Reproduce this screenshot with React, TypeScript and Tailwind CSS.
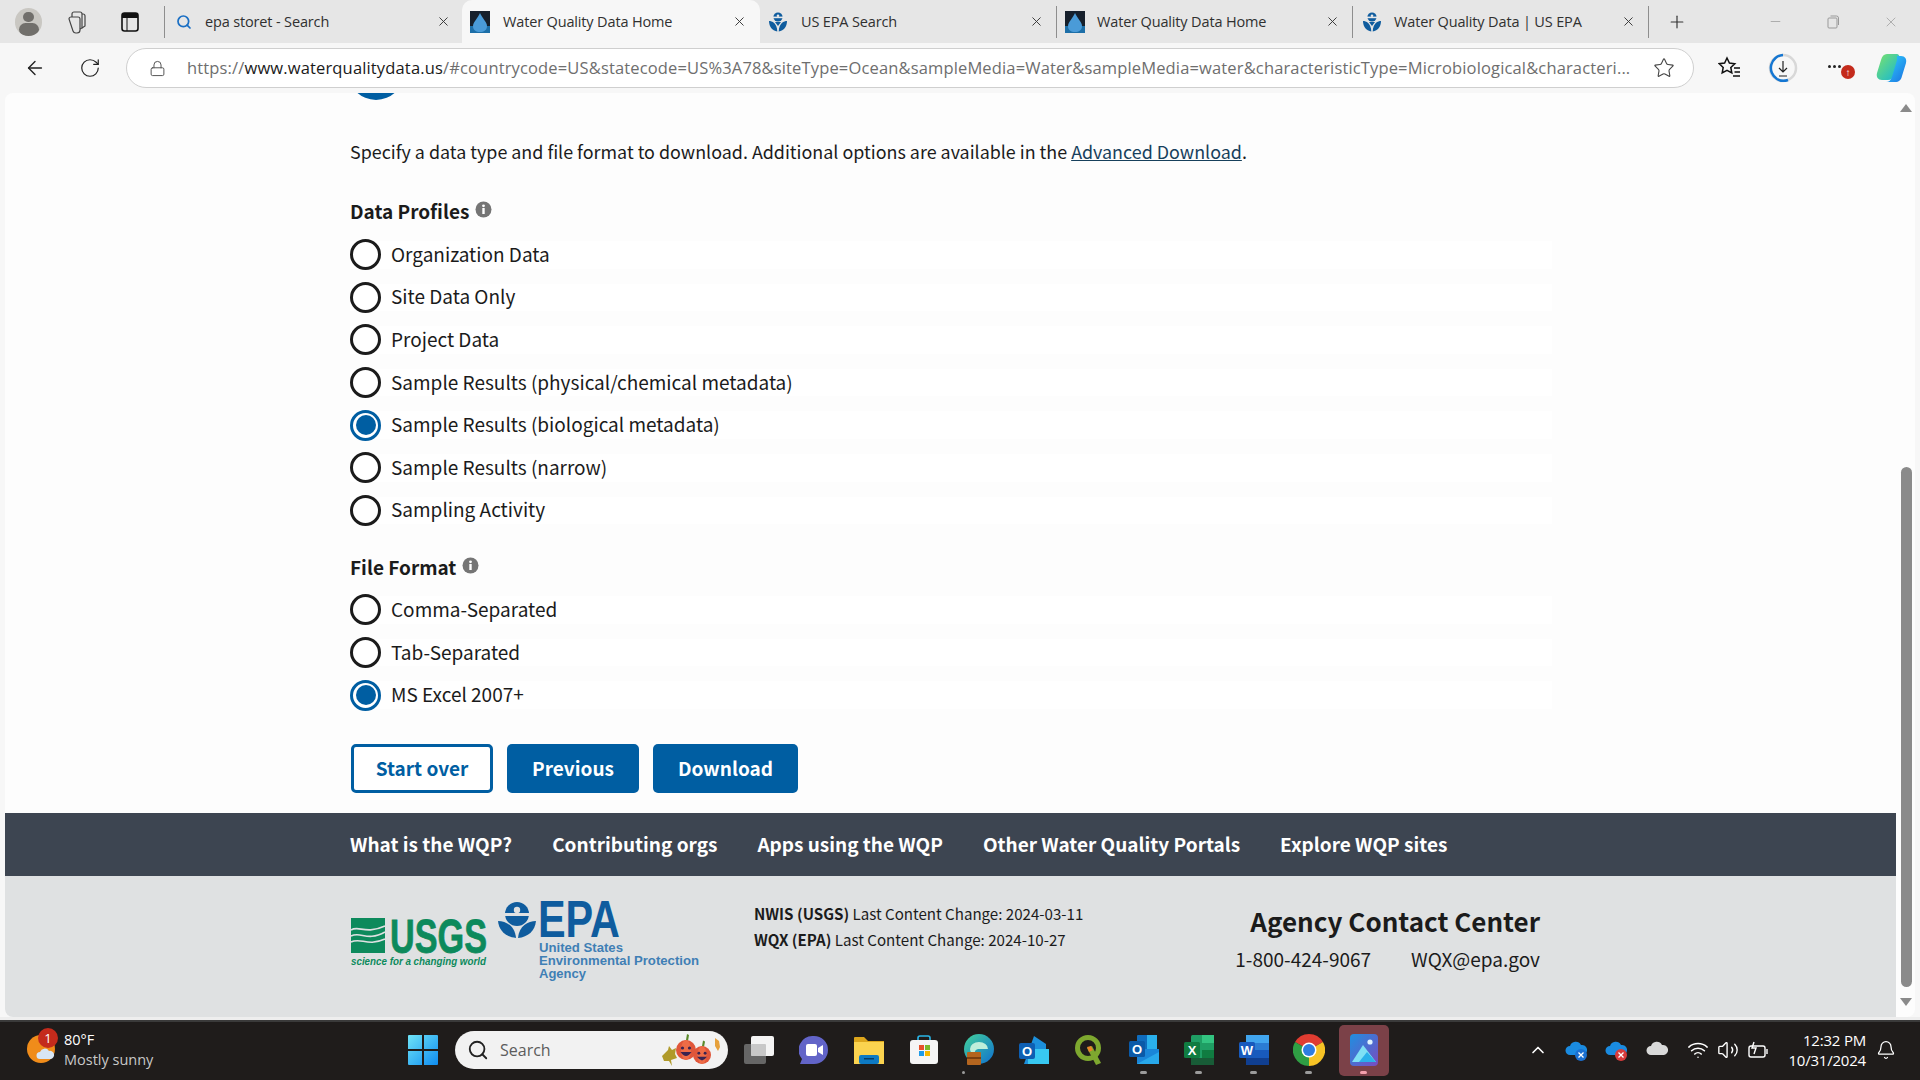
import React from 'react';
import { ArrowLeft, RotateCw, Lock, Star, X, Plus, Minus, Search, ChevronUp, Bell, Wifi, Volume2 } from 'lucide-react';

const blue = 'bg-[#005ea2]';

const WqpIcon = () => (
  <svg width="20" height="22" viewBox="0 0 20 22">
    <rect width="20" height="22" fill="#16202c" />
    <rect y="15" width="20" height="7" fill="#1d6fa8" />
    <path d="M10 2 C12 7 17 11 17 15 C17 19 14 21 10 21 C6 21 3 19 3 15 C3 11 8 7 10 2Z" fill="#4a9bd8" />
  </svg>
);

const EpaIcon = ({ size = 20 }: { size?: number }) => (
  <svg width={size} height={size} viewBox="0 0 20 20">
    <circle cx="10" cy="5" r="4.6" fill="#0f5c9e" />
    <rect x="3" y="4.6" width="14" height="1.6" fill="#e8e8e8" />
    <circle cx="10" cy="3.8" r="1.3" fill="#e8e8e8" />
    <path d="M1 9 C4 9 9 11 9.3 19.5 C4 19 1 14 1 9Z" fill="#0f5c9e" />
    <path d="M19 9 C16 9 11 11 10.7 19.5 C16 19 19 14 19 9Z" fill="#0f5c9e" />
    <path d="M7 10 h6 l-3 4z" fill="#0f5c9e" />
  </svg>
);

const Tab = ({ title, icon, active, sep, width, pl, gap, mr }: {
  title: string;
  icon: React.ReactNode;
  active?: boolean;
  sep?: boolean;
  width: string;
  pl: string;
  gap: string;
  mr: string;
}) => (
  <div className={`flex h-[43px] items-center ${width} ${pl} ${active ? 'bg-[#f7f7f7] rounded-t-[10px]' : ''}`}>
    {icon}
    <span className={`${gap} text-[#303030] text-[14.5px] tracking-[-0.15px] whitespace-nowrap`}>{title}</span>
    <X className={`ml-auto ${mr} text-[#333]`} size={15} strokeWidth={1.5} />
    {sep && <div className="h-[32px] w-px bg-[#8e8e8e]" />}
  </div>
);

const TabBar = () => (
  <div className="flex h-[43px] items-center bg-[#e6e6e6]">
    <div className="ml-[15px] flex h-[28px] w-[27px] flex-col items-center overflow-hidden rounded-full bg-[#c9c7c2]">
      <div className="mt-[4px] h-[11px] w-[11px] rounded-full bg-[#716f6b]" />
      <div className="mt-[1px] h-[14px] w-[20px] rounded-full bg-[#716f6b]" />
    </div>
    <svg className="ml-[21px]" width="24" height="26" viewBox="0 0 24 26" fill="none" stroke="#444" strokeWidth="1.2">
      <path d="M8 8 h7 a2 2 0 0 1 2 2 v11 a3 3 0 0 1 -3 3 h-1 a3 3 0 0 1 -3 -2 l-4 -12 a2 2 0 0 1 2 -2z" />
      <path d="M9 8 l0 -3 a2 2 0 0 1 2 -2 h6 a2 2 0 0 1 2 2 v14 l-2 1" />
      <path d="M19 5 h1 a2 2 0 0 1 2 2 v10 l-3 2" />
    </svg>
    <svg className="ml-[34px]" width="18" height="20" viewBox="0 0 18 20" fill="none">
      <rect x="1" y="1" width="16" height="18" rx="2.5" stroke="#111" strokeWidth="1.6" />
      <rect x="1" y="1" width="16" height="5" fill="#111" />
      <path d="M6 6 v13" stroke="#111" strokeWidth="1" />
    </svg>
    <div className="ml-[25px] h-[32px] w-px bg-[#8e8e8e]" />
    <Tab title="epa storet - Search" width="w-[297px]" pl="pl-[11px]" gap="ml-[13px]" mr="mr-[11px]"
      icon={<Search size={16} strokeWidth={2.6} className="text-[#1a6fc4]" />} />
    <Tab active title="Water Quality Data Home" width="w-[298px]" pl="pl-[8px]" gap="ml-[13px]" mr="mr-[13px]" icon={<WqpIcon />} />
    <Tab sep title="US EPA Search" width="w-[297px]" pl="pl-[8px]" gap="ml-[13px]" mr="mr-[12px]" icon={<EpaIcon />} />
    <Tab sep title="Water Quality Data Home" width="w-[296px]" pl="pl-[8px]" gap="ml-[12px]" mr="mr-[12px]" icon={<WqpIcon />} />
    <Tab sep title="Water Quality Data | US EPA" width="w-[296px]" pl="pl-[9px]" gap="ml-[12px]" mr="mr-[12px]" icon={<EpaIcon />} />
    <Plus className="ml-[18px] text-[#333]" size={20} strokeWidth={1.4} />
    <Minus className="ml-[81px] text-[#999]" size={15} strokeWidth={1.2} />
    <svg className="ml-[44px]" width="13" height="14" viewBox="0 0 13 14" fill="none" stroke="#999" strokeWidth="1">
      <rect x="1" y="3" width="9" height="10" rx="1" />
      <path d="M3.5 1 h6 a2 2 0 0 1 2 2 v7" />
    </svg>
    <X className="ml-[43px] text-[#999]" size={16} strokeWidth={1.1} />
  </div>
);

const AddressBar = () => (
  <div className="flex h-[50px] items-center bg-[#f7f7f7] pl-[24px]">
    <ArrowLeft size={22} strokeWidth={1.5} className="text-[#222]" />
    <RotateCw size={22} strokeWidth={1.3} className="ml-[33px] text-[#222]" />
    <div className="ml-[25px] flex h-[40px] w-[1568px] items-center rounded-full border border-[#cfcfcf] bg-white pl-[22px]">
      <Lock size={17} strokeWidth={1.4} className="text-[#555]" />
      <div className="ml-[21px] w-[1448px] whitespace-nowrap text-[16.5px] tracking-[0.15px] text-[#6e6e6e]">
        https://<span className="text-[#1a1a1a]">www.waterqualitydata.us</span>/#countrycode=US&amp;statecode=US%3A78&amp;siteType=Ocean&amp;sampleMedia=Water&amp;sampleMedia=water&amp;characteristicType=Microbiological&amp;characteri...
      </div>
      <Star size={22} strokeWidth={1.2} className="ml-[18px] text-[#444]" />
    </div>
    <svg className="ml-[24px]" width="24" height="24" viewBox="0 0 24 24" fill="none" stroke="#111" strokeWidth="1.5">
      <path d="M9 2 l2.4 5 5.4 .7 -4 3.8 1 5.4 -4.8 -2.6 -4.8 2.6 1 -5.4 -4 -3.8 5.4 -.7z" />
      <path d="M16 12 h6 M16.5 16 h5.5 M15 20 h7" />
    </svg>
    <svg className="ml-[25px]" width="32" height="32" viewBox="0 0 32 32" fill="none">
      <circle cx="16" cy="16" r="13" stroke="#d8d8d8" strokeWidth="2.5" />
      <path d="M16 3 A13 13 0 0 0 10 27 M10 27 A13 13 0 0 0 21 28" stroke="#1476d2" strokeWidth="2.5" />
      <path d="M16 9 v11 M12 16 l4 4 4 -4 M12 24 h8" stroke="#222" strokeWidth="1.2" />
    </svg>
    <div className="relative ml-[29px] flex h-[24px] w-[24px] items-start justify-start pt-[9px]">
      <div className="flex gap-[2px]">
        <div className="h-[3px] w-[3px] rounded-full bg-[#222]" />
        <div className="h-[3px] w-[3px] rounded-full bg-[#222]" />
        <div className="h-[3px] w-[3px] rounded-full bg-[#222]" />
      </div>
      <div className="absolute left-[13px] top-[9px] flex h-[14px] w-[14px] items-center justify-center rounded-full bg-[#c42b1c] text-[10px] font-bold leading-none text-white">↑</div>
    </div>
    <svg className="ml-[24px]" width="32" height="32" viewBox="0 0 32 32">
      <defs>
        <linearGradient id="cpA" x1="0" y1="0" x2="1" y2="1"><stop offset="0" stopColor="#2fd4ff" /><stop offset="1" stopColor="#1b6fe0" /></linearGradient>
        <linearGradient id="cpB" x1="0" y1="0" x2="1" y2="1"><stop offset="0" stopColor="#7de36a" /><stop offset="1" stopColor="#12b5d8" /></linearGradient>
      </defs>
      <path d="M11 2 h9 c3 0 4 2 3 5 l-5 16 c-1 3 -3 5 -6 5 h-6 c-4 0 -6 -3 -5 -7 l4 -13 c1 -4 3 -6 6 -6z" fill="url(#cpB)" />
      <path d="M21 4 h4 c4 0 6 3 5 7 l-4 13 c-1 4 -3 6 -7 6 h-9 c3 0 5 -2 6 -5 l5 -17 c0 -2 0 -4 0 -4z" fill="url(#cpA)" />
    </svg>
  </div>
);

const Radio = ({ label, checked }: { label: string; checked?: boolean }) => (
  <div className="flex h-[27.6px] w-[1202px] items-center bg-white">
    <div className={`flex h-[31px] w-[31px] shrink-0 items-center justify-center rounded-full border-[3px] bg-white ${checked ? 'border-[#005ea2]' : 'border-[#1b1b1b]'}`}>
      {checked && <div className={`h-[20px] w-[20px] rounded-full ${blue}`} />}
    </div>
    <span className="mb-[2px] ml-[10px] text-[19px] leading-[28px] text-[#1b1b1b]">{label}</span>
  </div>
);

const Info = () => (
  <svg className="mb-[4px] ml-[6px]" width="17" height="17" viewBox="0 0 17 17">
    <circle cx="8.5" cy="8.5" r="8" fill="#757575" />
    <rect x="7.3" y="7" width="2.4" height="6" fill="#fff" />
    <circle cx="8.5" cy="4.8" r="1.4" fill="#fff" />
  </svg>
);

const UsgsLogo = () => (
  <svg width="138" height="64" viewBox="0 -9 138 64" className="mt-[8px] shrink-0">
    <rect x="1" y="1" width="34" height="35" fill="#0d8a5c" />
    <path d="M1 13 C9 8 15 18 35 9 M1 19 C11 14 17 25 35 15 M1 25 C11 20 17 30 35 22" stroke="#dfe1e2" strokeWidth="1.6" fill="none" />
    <text x="40" y="36" fontFamily="Liberation Sans" fontWeight="700" fontSize="49" fill="#0d8a5c" stroke="#0d8a5c" strokeWidth="0.8" textLength="97" lengthAdjust="spacingAndGlyphs">USGS</text>
    <text x="1" y="48" fontFamily="Liberation Sans" fontStyle="italic" fontWeight="700" fontSize="11" fill="#0d8a5c" textLength="135" lengthAdjust="spacingAndGlyphs">science for a changing world</text>
  </svg>
);

const EpaLogo = () => (
  <svg width="204" height="94" viewBox="0 -11 204 94" className="ml-[10px] mt-[-10px] shrink-0">
    <circle cx="19" cy="13" r="12" fill="#0f5c9e" />
    <rect x="6" y="12" width="26" height="3" fill="#dfe1e2" />
    <circle cx="19" cy="9" r="3.2" fill="#dfe1e2" />
    <path d="M0 20 C8 20 17 25 18 37 C8 36 1 30 0 20Z" fill="#0f5c9e" />
    <path d="M38 20 C30 20 21 25 20 37 C30 36 37 30 38 20Z" fill="#0f5c9e" />
    <text x="40" y="36" fontFamily="Liberation Sans" fontWeight="700" fontSize="51" fill="#0f5c9e" textLength="82" lengthAdjust="spacingAndGlyphs">EPA</text>
    <text x="41" y="51" fontFamily="Liberation Sans" fontWeight="700" fontSize="12" fill="#3f7fb5" textLength="84" lengthAdjust="spacingAndGlyphs">United States</text>
    <text x="41" y="64" fontFamily="Liberation Sans" fontWeight="700" fontSize="12" fill="#3f7fb5" textLength="160" lengthAdjust="spacingAndGlyphs">Environmental Protection</text>
    <text x="41" y="77" fontFamily="Liberation Sans" fontWeight="700" fontSize="12" fill="#3f7fb5" textLength="47" lengthAdjust="spacingAndGlyphs">Agency</text>
  </svg>
);

const Page = () => (
  <div className="flex w-[1891px] flex-col bg-[#fdfdfd] font-['Noto_Sans_CJK_SC',sans-serif] text-[#1b1b1b]">
    <div className="flex-1 pl-[345px]">
      <div className={`ml-[-2px] mt-[-49px] h-[56px] w-[56px] rounded-full ${blue}`} />
      <p className="mt-[37px] text-[17.9px] leading-[28px]">
        Specify a data type and file format to download. Additional options are available in the <a className="text-[#17405c] underline">Advanced Download</a>.
      </p>
      <div className="mt-[32px] flex h-[28px] items-center">
        <span className="text-[19px] font-bold leading-[28px]">Data Profiles</span>
        <Info />
      </div>
      <div className="mt-[16px] flex flex-col gap-[15px]">
        <Radio label="Organization Data" />
        <Radio label="Site Data Only" />
        <Radio label="Project Data" />
        <Radio label="Sample Results (physical/chemical metadata)" />
        <Radio label="Sample Results (biological metadata)" checked />
        <Radio label="Sample Results (narrow)" />
        <Radio label="Sampling Activity" />
      </div>
      <div className="mt-[29px] flex h-[28px] items-center">
        <span className="text-[19px] font-bold leading-[28px]">File Format</span>
        <Info />
      </div>
      <div className="mt-[15px] flex flex-col gap-[15px]">
        <Radio label="Comma-Separated" />
        <Radio label="Tab-Separated" />
        <Radio label="MS Excel 2007+" checked />
      </div>
      <div className="mt-[35.4px] flex gap-[14px] text-[19px] font-bold">
        <button className="ml-[1px] h-[49px] w-[142px] rounded-[5px] border-[3px] border-[#005ea2] bg-white pb-[2px] text-[#005ea2]" type="button">Start over</button>
        <button className={`h-[49px] w-[132px] rounded-[5px] pb-[2px] text-white ${blue}`} type="button">Previous</button>
        <button className={`h-[49px] w-[145px] rounded-[5px] pb-[2px] text-white ${blue}`} type="button">Download</button>
      </div>
    </div>
    <div className="flex h-[63px] shrink-0 items-center gap-[40px] bg-[#3d4551] pl-[345px] text-[19px] font-bold text-white">
      <span>What is the WQP?</span>
      <span>Contributing orgs</span>
      <span>Apps using the WQP</span>
      <span>Other Water Quality Portals</span>
      <span>Explore WQP sites</span>
    </div>
    <div className="flex h-[141px] shrink-0 items-start bg-[#dfe1e2] pl-[345px] pr-[356px] pt-[24px]">
      <UsgsLogo />
      <EpaLogo />
      <div className="ml-[52px] text-[15.1px] leading-[26px]">
        <div><b>NWIS (USGS)</b> Last Content Change: 2024-03-11</div>
        <div><b>WQX (EPA)</b> Last Content Change: 2024-10-27</div>
      </div>
      <div className="ml-auto mt-[3px] text-right">
        <div className="text-[26px] font-bold leading-[36px]">Agency Contact Center</div>
        <div className="mt-[5px] flex justify-end gap-[40px] text-[19px] leading-[30px]">
          <span>1-800-424-9067</span>
          <span>WQX@epa.gov</span>
        </div>
      </div>
    </div>
  </div>
);

const Scrollbar = () => (
  <div className="flex w-[19px] flex-col items-center bg-[#fdfdfd] pl-[1px] pt-[11px]">
    <div className="h-0 w-0 border-x-[6px] border-b-[8px] border-x-transparent border-b-[#8b8b8b]" />
    <div className="mt-[355px] h-[520px] w-[11px] rounded-full bg-[#8b8b8b]" />
    <div className="mt-[11px] h-0 w-0 border-x-[6px] border-t-[8px] border-x-transparent border-t-[#8b8b8b]" />
  </div>
);

const Slot = ({ children, dot, pink }: { children: React.ReactNode; dot?: boolean; pink?: boolean }) => (
  <div className="relative flex h-[51px] w-[55px] shrink-0 items-center justify-center">
    {pink && <div className="absolute inset-y-0 left-[2.5px] w-[50px] rounded-[5px] bg-[#7b4148]" />}
    <div className="relative">{children}</div>
    {dot && <div className={`absolute bottom-[2px] left-[24px] h-[3px] w-[7px] rounded-full ${pink ? 'bg-[#f2a0ac]' : 'bg-[#9b9b9b]'}`} />}
  </div>
);

const Windows = () => (
  <svg width="30" height="30" viewBox="0 0 30 30">
    <defs>
      <linearGradient id="winG" x1="0" y1="0" x2="1" y2="1"><stop offset="0" stopColor="#6fe4f7" /><stop offset="1" stopColor="#0f8cf0" /></linearGradient>
    </defs>
    <path d="M0 1 a1 1 0 0 1 1 -1 h13 v14 h-14z M16 0 h13 a1 1 0 0 1 1 1 v13 h-14z M0 16 h14 v14 h-13 a1 1 0 0 1 -1 -1z M16 16 h14 v13 a1 1 0 0 1 -1 1 h-13z" fill="url(#winG)" />
  </svg>
);

const Pumpkin = ({ x, y, r }: { x: number; y: number; r: number }) => (
  <g>
    <path d={`M${x} ${y - r} l1 -${r * 0.6} 2 1 -1 ${r * 0.6}z`} fill="#5a8a2a" />
    <ellipse cx={x} cy={y} rx={r} ry={r} fill="#e0563a" />
    <ellipse cx={x} cy={y} rx={r * 0.5} ry={r} fill="#ee6c47" />
    <circle cx={x - r * 0.35} cy={y - r * 0.2} r={r * 0.16} fill="#3b2350" />
    <circle cx={x + r * 0.35} cy={y - r * 0.2} r={r * 0.16} fill="#3b2350" />
    <path d={`M${x - r * 0.55} ${y + r * 0.2} Q${x} ${y + r} ${x + r * 0.55} ${y + r * 0.2}z`} fill="#3b2350" />
  </g>
);

const SearchPill = () => (
  <div className="ml-[5px] flex h-[38px] w-[273px] shrink-0 items-center rounded-full bg-[#f2f2f2] pl-[12px]">
    <Search size={22} strokeWidth={2} className="text-[#222]" />
    <span className="ml-[11px] text-[16px] text-[#5c5c5c]">Search</span>
    <svg className="ml-auto mr-[4px]" width="64" height="36" viewBox="0 0 64 36">
      <path d="M2 24 l6 -6 1 -4 3 4 4 -2 -1 6 2 4 -6 2 1 6 -3 -5 -5 0z" fill="#b09a2a" />
      <Pumpkin x={26} y={18} r={10} />
      <Pumpkin x={42} y={23} r={9} />
      <path d="M55 6 l4 3 1 6 -2 4 -3 -5z" fill="#e6a13c" />
    </svg>
  </div>
);

const TaskIcons = () => (
  <>
    <Slot>
      <svg width="30" height="30" viewBox="0 0 30 30">
        <rect x="0" y="9" width="22" height="20" rx="2" fill="#666" />
        <rect x="7" y="1" width="23" height="20" rx="2" fill="#f4f4f4" />
        <rect x="7" y="9" width="15" height="12" rx="1" fill="#c8c8c8" />
      </svg>
    </Slot>
    <Slot>
      <svg width="30" height="30" viewBox="0 0 30 30">
        <path d="M15 1 a14 14 0 0 1 0 28 h-14 l2 -5 a14 14 0 0 1 12 -23z" fill="#6264c8" />
        <rect x="7" y="9" width="11" height="12" rx="2" fill="#fff" />
        <path d="M19 13 l5 -3 v10 l-5 -3z" fill="#fff" />
      </svg>
    </Slot>
    <Slot>
      <svg width="30" height="30" viewBox="0 0 30 30">
        <path d="M0 3 a1 1 0 0 1 1 -1 h9 l4 4 h16 v23 h-30z" fill="#dda61c" />
        <rect x="0" y="7" width="30" height="22" fill="#fbd34f" />
        <rect x="5" y="20" width="20" height="9" rx="2" fill="#0d7ac4" />
        <rect x="10" y="23" width="10" height="1.5" fill="#063c66" />
      </svg>
    </Slot>
    <Slot>
      <svg width="30" height="30" viewBox="0 0 30 30">
        <path d="M9 5 v-2 a2 2 0 0 1 2 -2 h8 a2 2 0 0 1 2 2 v2" fill="none" stroke="#2ab6e8" strokeWidth="1.6" />
        <rect x="1" y="5" width="28" height="24" rx="3" fill="#f5f5f5" />
        <rect x="10" y="10" width="5" height="5" fill="#e8512a" />
        <rect x="16" y="10" width="5" height="5" fill="#7cb82a" />
        <rect x="10" y="16" width="5" height="5" fill="#1e9be8" />
        <rect x="16" y="16" width="5" height="5" fill="#f5b800" />
      </svg>
    </Slot>
    <div className="relative flex h-[51px] w-[55px] shrink-0 items-center justify-center">
      <svg width="30" height="32" viewBox="0 0 30 32">
        <defs>
          <linearGradient id="edgeG" x1="0" y1="0" x2="1" y2="1"><stop offset="0" stopColor="#43d29a" /><stop offset="1" stopColor="#0f6fd0" /></linearGradient>
        </defs>
        <circle cx="15" cy="15" r="15" fill="url(#edgeG)" />
        <path d="M6 15 a9 7 0 0 1 18 0 l-9 0 c-3 0 -5 2 -4 6 c-3 -1 -5 -3 -5 -6z" fill="#bfeeda" />
        <rect x="3" y="18" width="14" height="13" rx="1" fill="#b4651f" />
        <rect x="3" y="23" width="14" height="2" fill="#7a3f10" />
      </svg>
      <div className="absolute bottom-[2px] left-[11px] h-[3px] w-[3px] rounded-full bg-[#9b9b9b]" />
    </div>
    <Slot>
      <svg width="30" height="30" viewBox="0 0 30 30">
        <path d="M15 1 l12 8 v18 a2 2 0 0 1 -2 2 h-20 z" fill="#1c90dc" />
        <rect x="9" y="14" width="21" height="15" fill="#38c8f2" />
        <rect x="0" y="8" width="16" height="16" rx="2" fill="#0d5fb3" />
        <text x="8" y="20.5" textAnchor="middle" fontFamily="Liberation Sans" fontWeight="700" fontSize="13" fill="#fff">O</text>
      </svg>
    </Slot>
    <Slot>
      <svg width="28" height="32" viewBox="0 0 28 32">
        <circle cx="13" cy="14" r="10.5" fill="none" stroke="#7ea82f" strokeWidth="5" />
        <path d="M12 14 l5 -2 9 17 -5 2z" fill="#7ea82f" />
        <path d="M12 13 l4 -1 2 4 -4 2z" fill="#e8852a" />
      </svg>
    </Slot>
    <Slot dot>
      <svg width="30" height="32" viewBox="0 0 30 32">
        <rect x="8" y="1" width="20" height="28" rx="1" fill="#0f6cbd" />
        <rect x="18" y="1" width="10" height="14" fill="#2ab0ec" />
        <path d="M8 15 h22 v15 h-22z" fill="#1a86d8" />
        <path d="M8 30 l22 -12 v12z" fill="#28a8ea" />
        <rect x="0" y="7" width="16" height="16" rx="1.5" fill="#0a5aa8" />
        <text x="8" y="19.5" textAnchor="middle" fontFamily="Liberation Sans" fontWeight="700" fontSize="13" fill="#fff">O</text>
      </svg>
    </Slot>
    <Slot dot>
      <svg width="30" height="32" viewBox="0 0 30 32">
        <rect x="7" y="1" width="23" height="30" rx="1.5" fill="#1f9e64" />
        <rect x="18" y="1" width="12" height="8" fill="#33c481" />
        <rect x="18" y="16" width="12" height="8" fill="#107c41" />
        <rect x="7" y="24" width="23" height="7" fill="#185c37" />
        <rect x="0" y="8" width="16" height="16" rx="1.5" fill="#107c41" />
        <text x="8" y="20.5" textAnchor="middle" fontFamily="Liberation Sans" fontWeight="700" fontSize="13" fill="#fff">X</text>
      </svg>
    </Slot>
    <Slot dot>
      <svg width="30" height="32" viewBox="0 0 30 32">
        <rect x="7" y="1" width="23" height="30" rx="1.5" fill="#2b7cd3" />
        <rect x="7" y="1" width="23" height="8" fill="#41a5ee" />
        <rect x="7" y="16" width="23" height="8" fill="#185abd" />
        <rect x="7" y="24" width="23" height="7" fill="#103f91" />
        <rect x="0" y="8" width="16" height="16" rx="1.5" fill="#185abd" />
        <text x="8" y="20.5" textAnchor="middle" fontFamily="Liberation Sans" fontWeight="700" fontSize="13" fill="#fff">W</text>
      </svg>
    </Slot>
    <Slot dot>
      <svg width="32" height="36" viewBox="0 0 32 32">
        <path d="M16 16 L2.1 8 A16 16 0 0 1 29.9 8z" fill="#e03c31" />
        <path d="M16 16 L29.9 8 A16 16 0 0 1 16 32z" fill="#f7c325" />
        <path d="M16 16 L16 32 A16 16 0 0 1 2.1 8z" fill="#2f9e44" />
        <circle cx="16" cy="16" r="7.5" fill="#fff" />
        <circle cx="16" cy="16" r="6" fill="#2f7de1" />
      </svg>
    </Slot>
    <Slot dot pink>
      <svg width="28" height="32" viewBox="0 0 28 32">
        <defs>
          <linearGradient id="phG" x1="0" y1="0" x2="1" y2="1"><stop offset="0" stopColor="#1f8fe0" /><stop offset="1" stopColor="#7a4bc0" /></linearGradient>
        </defs>
        <rect width="28" height="32" rx="4" fill="url(#phG)" />
        <circle cx="20" cy="8" r="2.6" fill="#dff3ff" />
        <path d="M2 28 L13 11 L26 28z" fill="#7fe0f5" />
        <path d="M9 28 L17 18 L26 28z" fill="#2bb0ea" />
      </svg>
    </Slot>
  </>
);

const CloudBadge = ({ fill, badge }: { fill: string; badge?: string }) => (
  <svg width="24" height="24" viewBox="0 0 24 24">
    <path d="M5 17 a4.5 4.5 0 0 1 0 -9 a6 6 0 0 1 11 -1 a5 5 0 0 1 2 10z" fill={fill} />
    {badge && <circle cx="16" cy="17" r="6" fill={badge} />}
    {badge && <path d="M13.5 14.5 l5 5 M18.5 14.5 l-5 5" stroke="#fff" strokeWidth="1.3" />}
  </svg>
);

const Tray = () => (
  <div className="ml-auto flex items-center pr-[14px]">
    <div className="flex w-[30px] justify-center"><ChevronUp size={20} strokeWidth={2} className="text-white" /></div>
    <div className="flex w-[48px] justify-center"><CloudBadge fill="#1a8be0" badge="#1a6fd0" /></div>
    <div className="flex w-[32px] justify-center"><CloudBadge fill="#1a8be0" badge="#d83b3b" /></div>
    <div className="flex w-[50px] justify-center"><CloudBadge fill="#d9d9d9" /></div>
    <div className="flex w-[30px] justify-center"><Wifi size={22} strokeWidth={1.7} className="text-white" /></div>
    <div className="flex w-[30px] justify-center"><Volume2 size={22} strokeWidth={1.5} className="text-white" /></div>
    <div className="flex w-[30px] justify-center">
      <svg width="22" height="22" viewBox="0 0 22 22" fill="none" stroke="#fff" strokeWidth="1.4">
        <rect x="2" y="7" width="16" height="11" rx="2" />
        <path d="M20 10 v5" />
        <path d="M7 3 l-2 6 h4 l-2 6" />
      </svg>
    </div>
    <div className="w-[93px] text-right text-[15px] leading-[20px] tracking-[-0.2px] text-white">
      <div>12:32 PM</div>
      <div>10/31/2024</div>
    </div>
    <div className="flex w-[40px] justify-center"><Bell size={20} strokeWidth={1.5} className="text-white" /></div>
  </div>
);

const Taskbar = () => (
  <div className="flex h-[60px] shrink-0 items-center border-t-2 border-[#3a3a3a] bg-[#1f1c1b] pb-[2px] text-white">
    <div className="flex w-[395px] shrink-0 items-center pl-[27px]">
      <div className="relative h-[30px] w-[30px]">
        <div className="h-[28px] w-[28px] rounded-full bg-[#f08c1a]" />
        <div className="absolute left-[11px] top-[-7px] flex h-[20px] w-[20px] items-center justify-center rounded-full bg-[#c42b1c] text-[13px] leading-none">1</div>
        <svg className="absolute left-[9px] top-[11px]" width="20" height="14" viewBox="0 0 20 14">
          <path d="M4 13 a3.5 3.5 0 0 1 0 -7 a5 5 0 0 1 9 -1 a4 4 0 0 1 2 8z" fill="#d8e6f5" />
        </svg>
      </div>
      <div className="ml-[7px] text-[14.5px] leading-[20px]">
        <div>80°F</div>
        <div className="text-[#c8c8c8]">Mostly sunny</div>
      </div>
    </div>
    <Slot><Windows /></Slot>
    <SearchPill />
    <div className="ml-[3px] flex"><TaskIcons /></div>
    <Tray />
  </div>
);

export default function App() {
  return (
    <div className="flex h-[1080px] w-[1920px] flex-col overflow-hidden bg-[#f7f7f7] font-['Open_Sans',sans-serif]">
      <TabBar />
      <AddressBar />
      <div className="flex h-[924px] shrink-0 px-[5px]">
        <div className="flex h-full w-[1910px] overflow-hidden rounded-[8px]">
          <Page />
          <Scrollbar />
        </div>
      </div>
      <div className="h-[3px] shrink-0 bg-[#eeeeee]" />
      <Taskbar />
    </div>
  );
}
